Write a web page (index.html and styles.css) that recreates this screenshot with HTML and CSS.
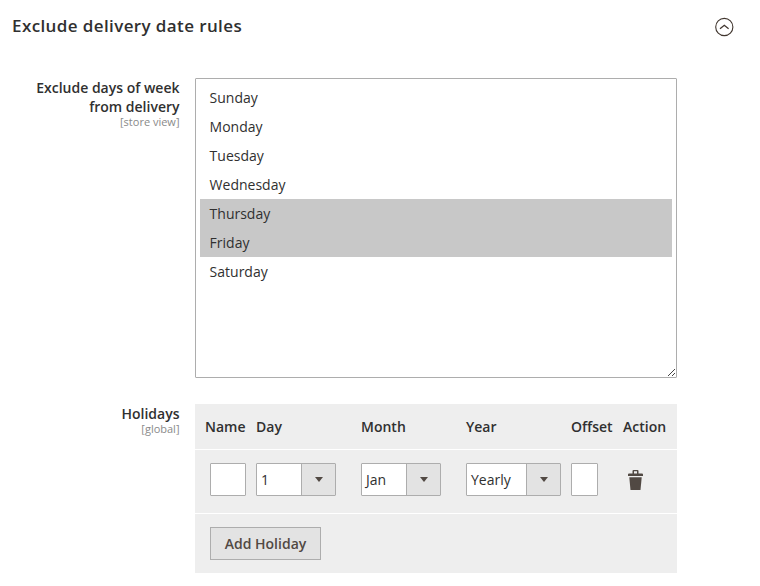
FILE: index.html
```html
<!DOCTYPE html>
<html lang="en">
<head>
<meta charset="utf-8">
<title>Exclude delivery date rules</title>
<link rel="stylesheet" href="styles.css">
</head>
<body>
<header class="section-head">
  <h1>Exclude delivery date rules</h1>
  <svg class="toggle" width="20" height="20" viewBox="0 0 20 20" fill="none" stroke="#41362f"><circle cx="10.300" cy="10" r="8.600" stroke-width="1.100"/><path d="M6 11.800 10.300 8.300l4.300 3.500" stroke-width="1.300"/></svg>
</header>
<main class="fields">
  <section class="field">
    <div class="label"><strong>Exclude days of week from delivery</strong><small>[store view]</small></div>
    <div class="listbox">
      <ul>
        <li>Sunday</li><li>Monday</li><li>Tuesday</li><li>Wednesday</li>
        <li class="selected">Thursday</li><li class="selected">Friday</li><li>Saturday</li>
      </ul>
      <svg class="grip" width="7" height="7" viewBox="0 0 7 7" stroke="#444" shape-rendering="crispEdges"><path d="M0 7 7 0M4 7 7 4"/></svg>
    </div>
  </section>
  <section class="field">
    <div class="label"><strong>Holidays</strong><small>[global]</small></div>
    <div class="holidays">
      <div class="row head"><span class="name">Name</span><span>Day</span><span>Month</span><span>Year</span><span>Offset</span><span>Action</span></div>
      <div class="row body">
        <div class="input"></div>
        <div class="select day"><span>1</span><i></i></div>
        <div class="select day"><span>Jan</span><i></i></div>
        <div class="select year"><span>Yearly</span><i></i></div>
        <div class="input offset"></div>
        <svg class="trash" width="15" height="20" viewBox="0 0 15 20" fill="#514943"><path fill-rule="evenodd" d="M4.500 1q0-1 1-1h4q1 0 1 1v2.500H14q1 0 1 1V6H0V4.500q0-1 1-1h3.500zM6 1.200v2.300h3V1.200z"/><path d="M1.300 7.200h12.400L12.500 20h-10z"/></svg>
      </div>
      <div class="foot"><button type="button">Add Holiday</button></div>
    </div>
  </section>
</main>
</body>
</html>
```
FILE: styles.css
```css
* { box-sizing: border-box; }
body { margin: 0; background: #fff; color: #303030; font: 14px/19px "Open Sans", sans-serif; }
.section-head { display: flex; justify-content: space-between; padding: 14px 26px 0 12px; height: 78px; }
h1 { margin: 0; font-size: 17px; line-height: 24px; font-weight: 600; letter-spacing: .39px; }
.toggle { margin-top: 3px; }
.fields { display: grid; gap: 26px; }
.field { display: grid; grid-template-columns: 180px 482px; column-gap: 15px; align-items: start; }
.label { text-align: right; padding: 0 .5px 0 30px; }
.label strong { display: block; font-weight: 600; }
.label small { display: block; font-size: 11px; line-height: 12px; color: #8a8a8a; }
.listbox { position: relative; height: 300px; border: 1px solid #adadad; border-radius: 1px; padding: 4px; }
.listbox ul { margin: 0; padding: 0; list-style: none; }
.listbox li { height: 29px; line-height: 29px; padding-left: 9.6px; }
.listbox .selected { background: #c8c8c8; }
.grip { position: absolute; right: 1px; bottom: 1px; }
.holidays { background: #eee; height: 169px; }
.row { display: grid; grid-template-columns: 36px 95px 95px 95px 42px 44px; column-gap: 10px; padding-left: 15px; border-bottom: 1px solid #fff; }
.head { height: 46px; line-height: 46px; font-weight: 600; }
.name { margin-left: -5px; }
.body { height: 64px; align-items: center; padding-bottom: 4px; }
.input, .select { height: 33px; background: #fff; border: 1px solid #adadad; border-radius: 1px; }
.offset { width: 27px; }
.select { display: flex; justify-content: space-between; line-height: 31px; padding-left: 4px; }
.day { width: 80px; }
.select i { width: 34px; background: #e3e3e3; border-left: 1px solid #adadad; display: grid; place-items: center; }
.select i::after { content: ""; border: 4px solid transparent; border-top: 5px solid #514943; border-bottom: 0; }
.trash { margin-left: 5px; }
.foot { padding: 13px 15px; }
button { width: 111px; height: 33px; padding: 0; border: 1px solid #adadad; background: #e3e3e3; color: #514943; font: 600 14px/19px "Open Sans", sans-serif; }
```
